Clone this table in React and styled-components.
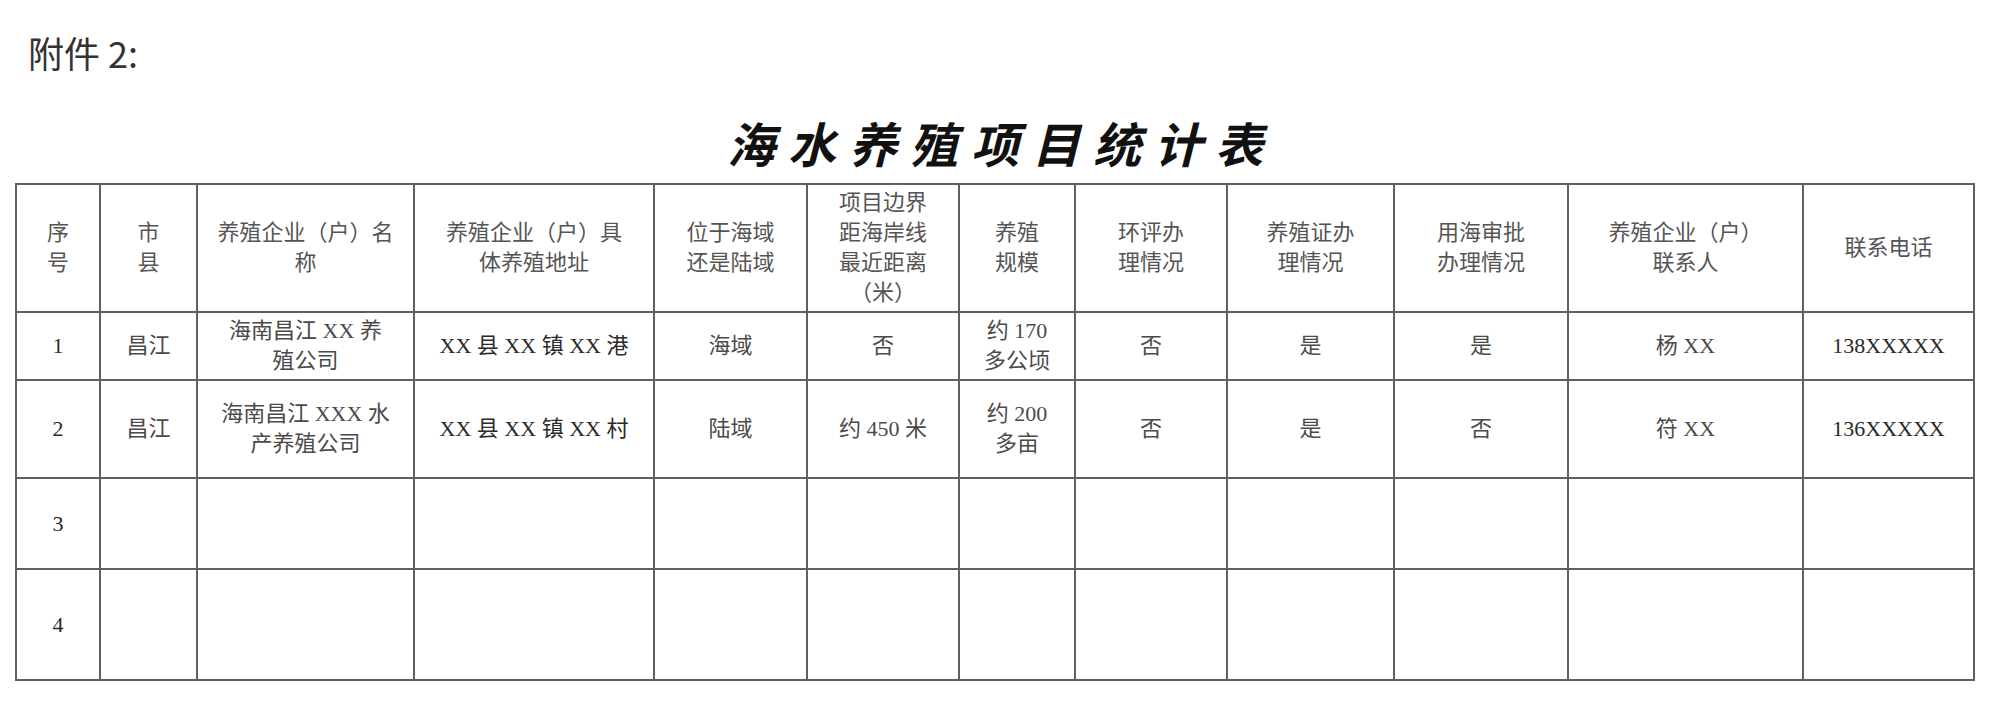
import React from 'react';
import styled, { createGlobalStyle } from 'styled-components';

const GlobalStyle = createGlobalStyle`
  html, body {
    margin: 0;
    padding: 0;
    background: #ffffff;
  }
`;

const Page = styled.div`
  width: 2000px;
  height: 702px;
  box-sizing: border-box;
  padding: 32px 0 0 15px;
  display: flex;
  flex-direction: column;
  overflow: hidden;
  font-family: "Liberation Serif", "Noto Sans CJK SC", serif;
`;

const Note = styled.div`
  padding-left: 13px;
  height: 40px;
  line-height: 40px;
  font-size: 36px;
  color: #333333;
  font-family: "Noto Sans CJK SC", "Noto Sans", sans-serif;
  font-weight: 400;
`;

const Title = styled.h1`
  margin: 42px 0 13px;
  width: 1960px;
  height: 56px;
  line-height: 56px;
  text-align: center;
  font-size: 48px;
  font-weight: 700;
  font-style: italic;
  letter-spacing: 13px;
  padding-left: 13px;
  box-sizing: border-box;
  color: #111111;
  font-family: "Noto Sans CJK SC", sans-serif;
`;

const Table = styled.table`
  width: 1960px;
  table-layout: fixed;
  border-collapse: collapse;
  border: 2px solid #555555;
`;

const Row = styled.tr`
  height: ${(p) => p.$h}px;
`;

const Cell = styled.td`
  border: 2px solid #606060;
  padding: 0 4px;
  text-align: center;
  vertical-align: middle;
  white-space: pre-line;
  font-size: 22px;
  line-height: 30px;
  color: ${(p) => (p.$dark ? '#2a2a2a' : '#4a4a4a')};
`;

const HeadCell = styled(Cell).attrs({ as: 'th' })`
  font-weight: 400;
  color: #555555;
`;

const widths = [84, 97, 217, 240, 153, 152, 116, 152, 167, 174, 235, 171];

const headers = [
  '序\n号',
  '市\n县',
  '养殖企业（户）名\n称',
  '养殖企业（户）具\n体养殖地址',
  '位于海域\n还是陆域',
  '项目边界\n距海岸线\n最近距离\n（米）',
  '养殖\n规模',
  '环评办\n理情况',
  '养殖证办\n理情况',
  '用海审批\n办理情况',
  '养殖企业（户）\n联系人',
  '联系电话',
];

const rows = [
  {
    h: 68,
    cells: ['1', '昌江', '海南昌江 XX 养\n殖公司', 'XX 县 XX 镇 XX 港', '海域', '否', '约 170\n多公顷', '否', '是', '是', '杨 XX', '138XXXXX'],
  },
  {
    h: 98,
    cells: ['2', '昌江', '海南昌江 XXX 水\n产养殖公司', 'XX 县 XX 镇 XX 村', '陆域', '约 450 米', '约 200\n多亩', '否', '是', '否', '符 XX', '136XXXXX'],
  },
  { h: 91, cells: ['3', '', '', '', '', '', '', '', '', '', '', ''] },
  { h: 111, cells: ['4', '', '', '', '', '', '', '', '', '', '', ''] },
];

const darkCols = [0, 3, 11];

export default function App() {
  return (
    <>
      <GlobalStyle />
      <Page>
        <Note>附件 2:</Note>
        <Title>海水养殖项目统计表</Title>
        <Table>
          <colgroup>
            {widths.map((w, i) => (
              <col key={i} style={{ width: w }} />
            ))}
          </colgroup>
          <thead>
            <Row $h={128}>
              {headers.map((t, i) => (
                <HeadCell key={i}>{t}</HeadCell>
              ))}
            </Row>
          </thead>
          <tbody>
            {rows.map((r, ri) => (
              <Row key={ri} $h={r.h}>
                {r.cells.map((t, ci) => (
                  <Cell key={ci} $dark={darkCols.includes(ci)}>
                    {t}
                  </Cell>
                ))}
              </Row>
            ))}
          </tbody>
        </Table>
      </Page>
    </>
  );
}
